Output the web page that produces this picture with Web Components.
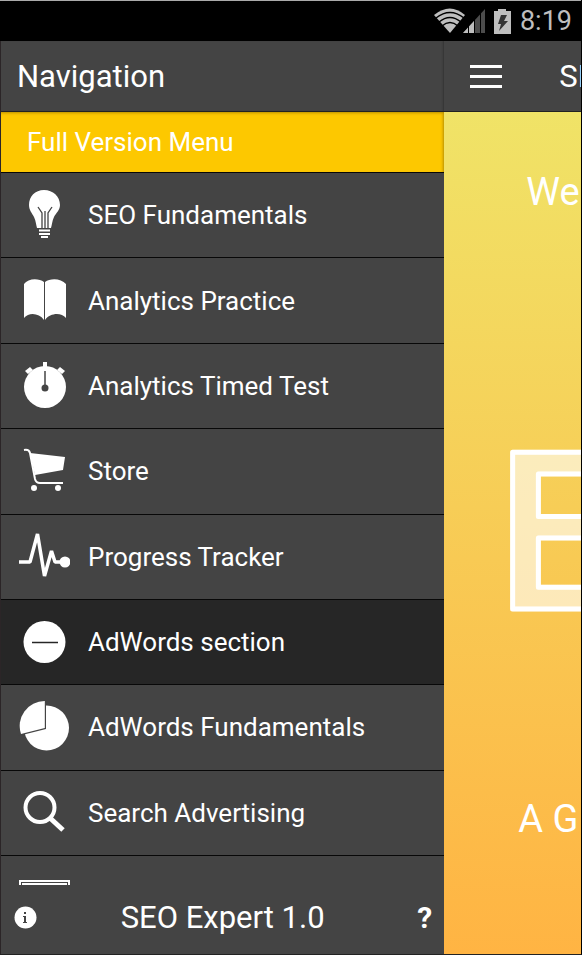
<!DOCTYPE html>
<html lang="en">
<head>
<meta charset="utf-8">
<meta name="viewport" content="width=device-width, initial-scale=1">
<title>SEO Expert</title>
<style>
    body {
        margin: 0;
        background: #000;
        color: #fff;
        font-family: Roboto, "Liberation Sans", sans-serif;
    }
</style>
</head>
<body>
<app-shell>
    <status-bar slot="status" time="8:19"></status-bar>

    <nav-drawer slot="drawer" heading="Navigation" banner="Full Version Menu">
        <nav-item icon="bulb">SEO Fundamentals</nav-item>
        <nav-item icon="book">Analytics Practice</nav-item>
        <nav-item icon="stopwatch">Analytics Timed Test</nav-item>
        <nav-item icon="cart">Store</nav-item>
        <nav-item icon="pulse">Progress Tracker</nav-item>
        <nav-item icon="minus" section>AdWords section</nav-item>
        <nav-item icon="pie">AdWords Fundamentals</nav-item>
        <nav-item icon="search">Search Advertising</nav-item>
        <nav-item icon="display" slot="next" label="Display"></nav-item>
        <drawer-footer slot="footer">SEO Expert 1.0</drawer-footer>
    </nav-drawer>

    <home-page heading="SE">
        <span slot="welcome">We</span>
        <span slot="tagline">A G</span>
    </home-page>
</app-shell>

<script>
const ICONS = {
    bulb: `
        <path d="M26 1C17 1 11 7.500 11 16C11 21 14 24 16 28C18 32 18 36 19 39H33C34 36 34 32 36 28C38 24 42 21 42 16C42 7.500 35 1 26 1Z"/>
        <path d="M20 18L24 24V39M34 18L30 24V39M27 22V39" fill="none" stroke="#444" stroke-width="1.300"/>
        <path d="M21 41.500H32M21 45H32M23 48H30" stroke="#fff" stroke-width="2"/>`,
    book: `
        <path d="M6 9C10 3 21 3 26 7V45C21 38 11 37 6 43Z"/>
        <path d="M27 7C32 3 43 3 48 9V43C43 37 32 38 27 45Z"/>`,
    stopwatch: `
        <circle cx="27" cy="27" r="21"/>
        <path d="M25 2H29V8H25ZM7 11L12 7L15 10L10 14ZM47 11L42 7L39 10L44 14Z"/>
        <path d="M27 11V28" stroke="#444" stroke-width="1.500"/>
        <circle cx="27" cy="28" r="3.500" fill="#444"/>`,
    cart: `
        <path d="M6 5Q11 4 12 8L17 34Q18 38 22 38H45" fill="none" stroke="#fff" stroke-width="2"/>
        <path d="M12 8L47 12L45 25L17 30Z"/>
        <circle cx="16" cy="43" r="3"/>
        <circle cx="40" cy="43" r="3"/>`,
    pulse: `
        <path d="M1 31H12L19.500 3L26.500 45L33.500 20L37 31H44" fill="none" stroke="#fff" stroke-width="3.500" stroke-linejoin="bevel"/>
        <circle cx="47" cy="31" r="5.500"/>`,
    minus: `
        <circle cx="26.500" cy="26" r="21"/>
        <path d="M14 26.500H40" stroke="#262626" stroke-width="1.500"/>`,
    pie: `
        <circle cx="28.500" cy="27" r="22.500"/>
        <path d="M28 0V28L0 35V0Z" fill="#444"/>
        <path d="M26.800 0V27L3 33A25 25 0 0 1 26.800 0Z"/>`,
    search: `
        <circle cx="22" cy="20.500" r="14.500" fill="none" stroke="#fff" stroke-width="4"/>
        <path d="M32 31L45 43" stroke="#fff" stroke-width="5"/>`,
    display: `
        <path d="M2 17V3H51V17" fill="none" stroke="#fff" stroke-width="2"/>
        <path d="M4 5H49V30H4Z"/>`
};

class StatusBar extends HTMLElement {
    constructor() {
        super();
        this.attachShadow({ mode: 'open' });
        this.shadowRoot.innerHTML = `
            <style>
                :host {
                    display: flex;
                    align-items: center;
                    justify-content: flex-end;
                    box-sizing: border-box;
                    height: 41px;
                    padding-right: 9px;
                    border-top: 1px solid #aaa;
                    background: #000;
                    color: #bebebe;
                    font-size: 27px;
                }

                svg {
                    fill: #bebebe;
                    margin-right: 8px;
                }
            </style>
            <svg width="78" height="28" viewBox="0 0 78 28" aria-hidden="true">
                <path d="M0 8Q16 -5 31 8L16 26Z"/>
                <path d="M2 11Q16 0 30 11M5 15Q16 6 27 15M8 19Q16 12 24 19" fill="none" stroke="#000" stroke-width="1.500"/>
                <path d="M51 2V26H29Z" fill="#4c4c4c"/>
                <path d="M40 14V26H29Z"/>
                <path d="M34.500 10V27M40.500 10V27M46.500 4V27" stroke="#000" stroke-width="1"/>
                <path d="M64 2H72V4H77V27H60V4H64Z"/>
                <path d="M67 8H73L70 14H74L65 24L67 17H64Z" fill="#333"/>
            </svg>
            <time></time>
        `;
    }

    connectedCallback() {
        this.shadowRoot.querySelector('time').textContent = this.getAttribute('time');
    }
}

class NavItem extends HTMLElement {
    constructor() {
        super();
        this.attachShadow({ mode: 'open' });
        this.shadowRoot.innerHTML = `
            <style>
                :host {
                    display: grid;
                    box-sizing: border-box;
                    border-bottom: 1px solid #080808;
                    background: #444;
                    font-size: 26px;
                    line-height: 32px;
                }

                :host([section]) {
                    background: #262626;
                }

                :host([slot="next"]) {
                    border: 0;
                }

                a {
                    display: flex;
                    align-items: center;
                    gap: 18px;
                    padding-left: 17px;
                    color: inherit;
                    text-decoration: none;
                    white-space: nowrap;
                }

                :host([slot="next"]) a {
                    align-items: flex-start;
                    padding-top: 22px;
                }

                svg {
                    flex: none;
                    fill: #fff;
                }
            </style>
            <a href="#">
                <svg width="52" height="52" viewBox="0 0 52 52" aria-hidden="true"></svg>
                <slot></slot>
            </a>
        `;
    }

    connectedCallback() {
        this.shadowRoot.querySelector('svg').innerHTML = ICONS[this.getAttribute('icon')];
        if (this.hasAttribute('label')) {
            this.shadowRoot.querySelector('a').setAttribute('aria-label', this.getAttribute('label'));
        }
    }
}

class DrawerFooter extends HTMLElement {
    constructor() {
        super();
        this.attachShadow({ mode: 'open' });
        this.shadowRoot.innerHTML = `
            <style>
                :host {
                    display: grid;
                    grid-template-columns: 1fr auto 1fr;
                    align-items: center;
                    box-sizing: border-box;
                    height: 69px;
                    padding: 0 12px 4px 12px;
                    background: #444;
                    font-size: 31px;
                }

                button {
                    display: flex;
                    padding: 0;
                    border: 0;
                    background: none;
                    color: #fff;
                    font: 700 30px Roboto, "Liberation Sans", sans-serif;
                }

                .help {
                    justify-self: end;
                }
            </style>
            <button type="button" aria-label="About">
                <svg width="24" height="24" viewBox="0 0 24 24" aria-hidden="true">
                    <circle cx="12.500" cy="11.500" r="11" fill="#fff"/>
                    <path d="M11 6H13V8H11ZM10 10H13V16H14V17H10V16H11V11H10Z" fill="#444"/>
                </svg>
            </button>
            <slot></slot>
            <button class="help" type="button">?</button>
        `;
    }
}

class NavDrawer extends HTMLElement {
    constructor() {
        super();
        this.attachShadow({ mode: 'open' });
        this.shadowRoot.innerHTML = `
            <style>
                :host {
                    display: flex;
                    flex-direction: column;
                    background: #444;
                    border-left: 1px solid #2b2527;
                }

                h1, h2 {
                    display: flex;
                    align-items: center;
                    box-sizing: border-box;
                    margin: 0;
                    font-weight: 400;
                }

                h1 {
                    height: 71px;
                    padding-left: 16px;
                    border-bottom: 1px solid #222;
                    box-shadow: inset -2px 0 2px -1px #333;
                    font-size: 31px;
                }

                h2 {
                    height: 61px;
                    padding-left: 26px;
                    border-bottom: 1px solid #080808;
                    background: #fdc800;
                    box-shadow: inset 0 3px 3px -2px #b98f00, inset -3px 0 3px -2px #b98f00;
                    font-size: 26px;
                }

                nav {
                    flex: 1;
                    display: grid;
                    grid-auto-rows: 1fr;
                }

                .next {
                    height: 29px;
                    overflow: hidden;
                }
            </style>
            <h1></h1>
            <h2></h2>
            <nav><slot></slot></nav>
            <div class="next"><slot name="next"></slot></div>
            <slot name="footer"></slot>
        `;
    }

    connectedCallback() {
        this.shadowRoot.querySelector('h1').textContent = this.getAttribute('heading');
        this.shadowRoot.querySelector('h2').textContent = this.getAttribute('banner');
    }
}

class HomePage extends HTMLElement {
    constructor() {
        super();
        this.attachShadow({ mode: 'open' });
        this.shadowRoot.innerHTML = `
            <style>
                :host {
                    display: flex;
                    flex-direction: column;
                    overflow: hidden;
                    white-space: nowrap;
                }

                header {
                    display: flex;
                    align-items: center;
                    gap: 57px;
                    box-sizing: border-box;
                    height: 71px;
                    padding-left: 26px;
                    border-bottom: 1px solid #222;
                    background: #444;
                    font-size: 31px;
                }

                button {
                    display: flex;
                    padding: 0;
                    border: 0;
                    background: none;
                }

                main {
                    flex: 1;
                    display: flex;
                    flex-direction: column;
                    box-sizing: border-box;
                    padding: 56px 0 111px;
                    background: linear-gradient(#f0e367, #ffb443);
                    font-size: 38px;
                    line-height: 48px;
                }

                .welcome {
                    padding-left: 82px;
                }

                .tagline {
                    padding-left: 74px;
                }

                .logo {
                    display: block;
                    flex: none;
                    margin: auto 0 auto 66px;
                    padding-top: 52px;
                    overflow: visible;
                    font-family: "Open Sans", sans-serif;
                    font-size: 220px;
                    font-weight: 600;
                }
            </style>
            <header>
                <button type="button" aria-label="Menu">
                    <svg width="32" height="24" viewBox="0 0 32 24" aria-hidden="true">
                        <path d="M0 2.500H32M0 12.500H32M0 22.500H32" stroke="#fff" stroke-width="3"/>
                    </svg>
                </button>
                <span></span>
            </header>
            <main>
                <div class="welcome"><slot name="welcome"></slot></div>
                <svg class="logo" width="140" height="162">
                    <text x="-18" y="158" fill="#fff" fill-opacity="0.6" stroke="#fff" stroke-width="5" stroke-linejoin="round">E</text>
                </svg>
                <div class="tagline"><slot name="tagline"></slot></div>
            </main>
        `;
    }

    connectedCallback() {
        this.shadowRoot.querySelector('span').textContent = this.getAttribute('heading');
    }
}

class AppShell extends HTMLElement {
    constructor() {
        super();
        this.attachShadow({ mode: 'open' });
        this.shadowRoot.innerHTML = `
            <style>
                :host {
                    display: flex;
                    flex-direction: column;
                    box-sizing: border-box;
                    min-height: 100vh;
                    border-right: 1px solid #000;
                    border-bottom: 1px solid #222;
                }

                .panes {
                    flex: 1;
                    display: grid;
                    grid-template-columns: minmax(0, 13fr) minmax(0, 4fr);
                }
            </style>
            <slot name="status"></slot>
            <div class="panes">
                <slot name="drawer"></slot>
                <slot></slot>
            </div>
        `;
    }
}

customElements.define('status-bar', StatusBar);
customElements.define('nav-item', NavItem);
customElements.define('drawer-footer', DrawerFooter);
customElements.define('nav-drawer', NavDrawer);
customElements.define('home-page', HomePage);
customElements.define('app-shell', AppShell);
</script>
</body>
</html>
